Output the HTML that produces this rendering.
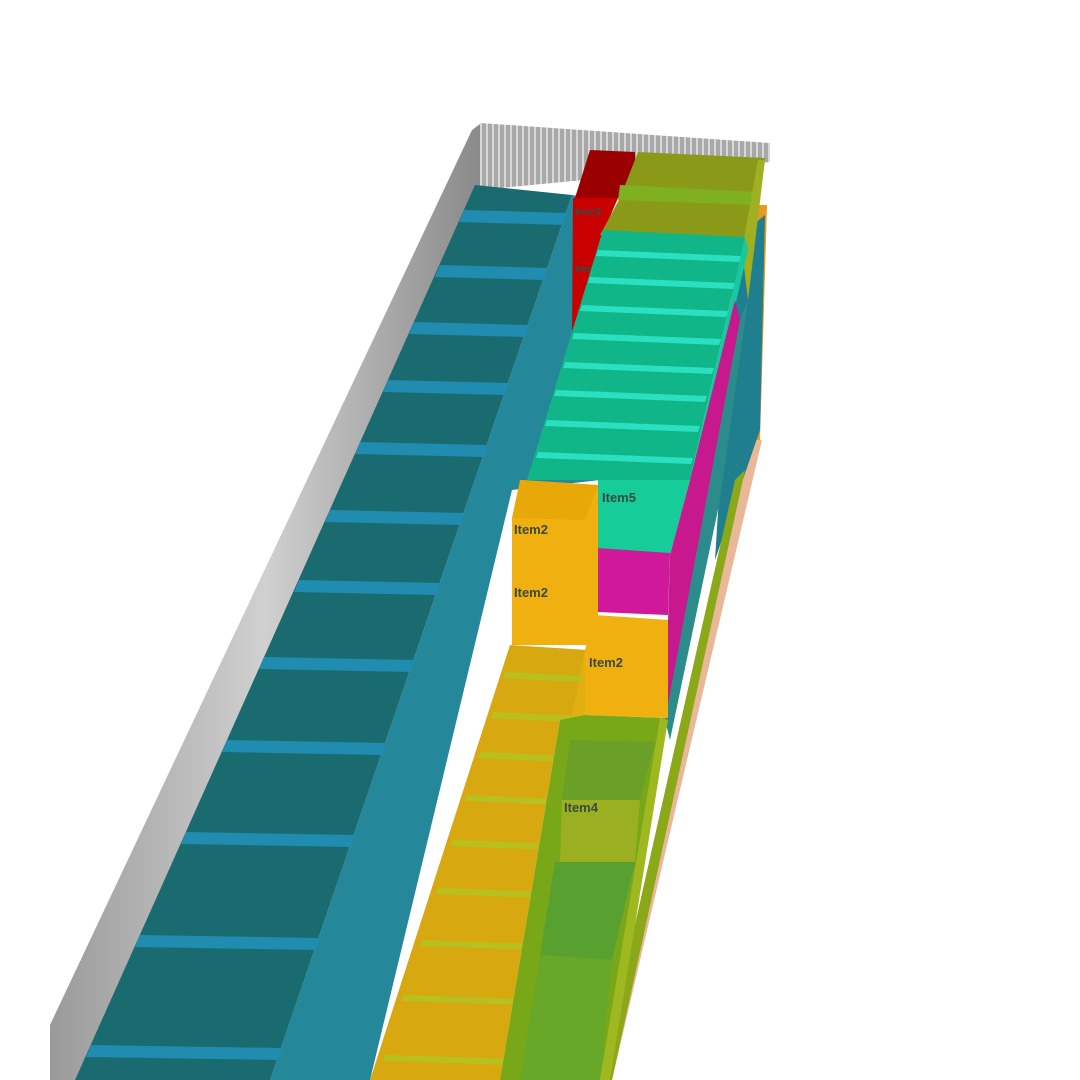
<!DOCTYPE html>
<html><head><style>html,body{margin:0;padding:0;background:#fff;width:1080px;height:1080px;overflow:hidden}
text{font-family:"Liberation Sans",sans-serif;font-weight:bold;fill:#3a4a40}</style></head><body>
<svg width="1080" height="1080" viewBox="0 0 1080 1080" xmlns="http://www.w3.org/2000/svg">
<defs>
<linearGradient id="wall" x1="0" x2="1"><stop offset="0" stop-color="#9a9a9a"/><stop offset=".5" stop-color="#d0d0d0"/><stop offset="1" stop-color="#8a8a8a"/></linearGradient>
<pattern id="ribs" width="6" height="10" patternUnits="userSpaceOnUse"><rect width="6" height="10" fill="#a8a8a8"/><rect width="2" height="10" fill="#d8d8d8"/></pattern>
</defs>
<!-- walls -->
<polygon points="472,130 480,124 480,190 100,1080 50,1080 50,1025" fill="url(#wall)"/>
<polygon points="480,123 770,143 770,162 480,190" fill="url(#ribs)"/>
<!-- right floor edge -->
<polygon points="752,440 762,440 612,1080 600,1080" fill="#e8b898"/>
<polygon points="755,205 767,205 760,440 748,440" fill="#e89a20"/>
<polygon points="735,240 765,215 760,430 715,560" fill="#1f7f8f"/>
<!-- teal column side face -->
<polygon points="572,195 600,200 600,480 512,490 370,1080 270,1080" fill="#24879a"/>
<!-- teal top -->
<polygon points="475,185 572,195 270,1080 75,1080" fill="#1a6b70"/>
<g fill="#1f8cb0">
<polygon points="464,210 567,213 563,225 459,222"/>
<polygon points="440,265 548,268 544,280 435,277"/>
<polygon points="414,322 529,325 525,337 409,334"/>
<polygon points="388,380 509,383 505,395 383,392"/>
<polygon points="360,442 488,445 484,457 355,454"/>
<polygon points="330,510 465,513 461,525 325,522"/>
<polygon points="299,580 441,583 437,595 294,592"/>
<polygon points="264,657 415,660 411,672 259,669"/>
<polygon points="227,740 386,743 382,755 222,752"/>
<polygon points="186,832 355,835 351,847 181,844"/>
<polygon points="140,935 320,938 316,950 135,947"/>
<polygon points="91,1045 282,1048 278,1060 86,1057"/>
</g>
<!-- red box -->
<polygon points="590,150 635,152 635,180 620,198 575,198" fill="#9a0000"/>
<polygon points="573,198 618,198 600,240 572,340" fill="#c80000"/>
<text x="575" y="215" font-size="10">Item3</text><text x="575" y="272" font-size="10">Item3</text>
<!-- olive box -->
<polygon points="638,152 765,158 758,205 745,240 600,235 620,198" fill="#8a9a18"/>
<polygon points="620,185 758,192 755,205 618,200" fill="#7fb020"/>
<polygon points="758,160 765,160 748,300 742,250" fill="#a0b020"/>
<!-- cyan region -->
<polygon points="603,230 745,237 690,480 527,480" fill="#10b588"/>
<g fill="#2ae0c0">
<polygon points="598,250 742,256 740,262 596,256"/>
<polygon points="590,277 735,283 733,289 588,283"/>
<polygon points="582,305 728,311 726,317 580,311"/>
<polygon points="574,333 721,339 719,345 572,339"/>
<polygon points="565,362 714,368 712,374 563,368"/>
<polygon points="556,390 707,396 705,402 554,396"/>
<polygon points="547,420 700,426 698,432 545,426"/>
<polygon points="538,452 693,458 691,464 536,458"/>
</g>
<polygon points="598,480 690,480 670,555 598,550" fill="#16cc98"/>
<text x="602" y="502" font-size="13">Item5</text>
<polygon points="745,237 748,250 695,480 690,480" fill="#18c8a0"/>
<!-- magenta -->
<polygon points="735,300 740,320 720,470 665,720 670,555 690,480" fill="#c8188e"/>
<polygon points="597,548 670,553 668,615 597,612" fill="#d0189a"/>
<!-- teal right strip -->
<polygon points="740,320 748,300 720,500 670,740 665,720" fill="#2b8c8c"/>
<polygon points="735,480 745,470 612,1080 600,1080" fill="#8aa818"/>
<!-- yellow column -->
<polygon points="510,645 588,650 585,715 560,720 500,1080 370,1080" fill="#d8a810"/>
<polygon points="585,650 595,650 530,1080 500,1080" fill="#e0b010"/>
<g fill="#b8c020">
<polygon points="505,672 582,676 580,682 503,678"/>
<polygon points="493,712 575,716 573,722 491,718"/>
<polygon points="480,752 568,756 566,762 478,758"/>
<polygon points="467,795 560,799 558,805 465,801"/>
<polygon points="453,840 552,844 550,850 451,846"/>
<polygon points="438,888 544,892 542,898 436,894"/>
<polygon points="422,940 535,944 533,950 420,946"/>
<polygon points="404,995 526,999 524,1005 402,1001"/>
<polygon points="385,1055 516,1059 514,1065 383,1061"/>
</g>
<!-- Item2 big -->
<polygon points="522,480 598,485 598,645 512,645 512,518" fill="#f0b010"/>
<polygon points="520,480 598,485 585,520 512,518" fill="#e8a808"/>
<text x="514" y="534" font-size="13">Item2</text><text x="514" y="597" font-size="13">Item2</text>
<!-- Item2 small -->
<polygon points="595,615 668,620 668,718 585,715 585,650" fill="#f0b010"/>
<text x="589" y="667" font-size="13">Item2</text>
<!-- green column -->
<polygon points="585,715 665,718 660,760 600,1080 500,1080 560,720" fill="#78a818"/>
<polygon points="570,740 655,742 640,800 562,800" fill="#6aa028"/>
<polygon points="562,800 640,800 635,862 560,862" fill="#9ab020"/>
<text x="564" y="812" font-size="13">Item4</text>
<polygon points="555,862 635,862 612,960 540,955" fill="#58a030"/>
<polygon points="540,955 612,960 600,1080 520,1080" fill="#68a828"/>
<polygon points="660,718 668,720 610,1080 600,1080" fill="#a0b820"/>
</svg>
</body></html>
